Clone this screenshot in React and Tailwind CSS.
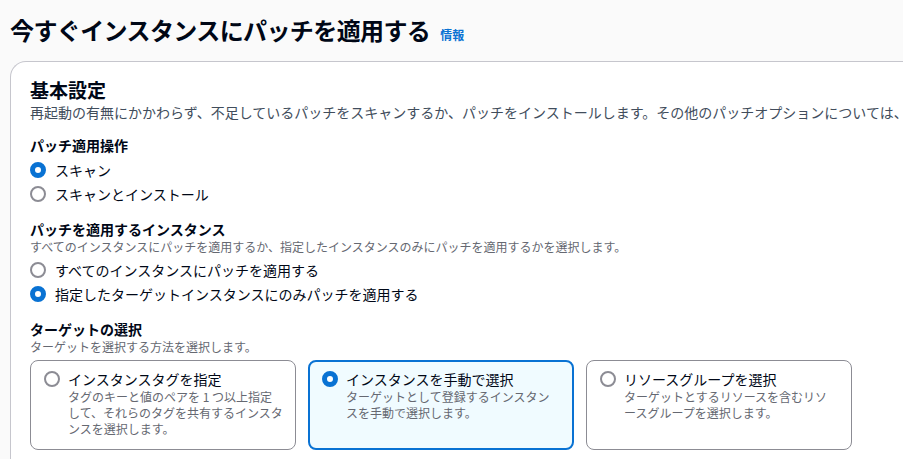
import React, { useState } from "react";

const font = { fontFamily: '"Noto Sans CJK JP", "Noto Sans", sans-serif' };

const Radio = ({ checked }) => (
  <span
    className={
      checked
        ? "block w-4 h-4 shrink-0 rounded-full border-[5px] border-[#0972d3] bg-white"
        : "block w-4 h-4 shrink-0 rounded-full border-2 border-[#8c8c94] bg-white"
    }
  />
);

const RadioRow = ({ label, checked, onClick }) => (
  <div className="flex items-center gap-[9px] h-6 cursor-pointer" onClick={onClick}>
    <Radio checked={checked} />
    <span className="text-sm text-[#000716] leading-5">{label}</span>
  </div>
);

const Tile = ({ title, lines, checked, onClick }) => (
  <div
    onClick={onClick}
    className={
      checked
        ? "w-[266px] h-[90px] rounded-lg border-2 border-[#0972d3] bg-[#f0fbff] pt-[7px] pl-[12px] pr-3 cursor-pointer"
        : "w-[266px] h-[90px] rounded-lg border border-[#8c8c94] bg-white pt-[8px] pl-[13px] pr-[13px] cursor-pointer"
    }
  >
    <div className="flex gap-2">
      <div className="h-5 flex items-center">
        <Radio checked={checked} />
      </div>
      <div>
        <div className="text-sm leading-5 text-[#000716]">{title}</div>
        {lines.map((line) => (
          <div key={line} className="text-xs leading-4 text-[#656871] whitespace-nowrap">
            {line}
          </div>
        ))}
      </div>
    </div>
  </div>
);

const App = () => {
  const [op, setOp] = useState("scan");
  const [scope, setScope] = useState("target");
  const [target, setTarget] = useState("manual");

  return (
    <div className="w-[903px] h-[459px] overflow-hidden bg-[#fafafa]" style={font}>
      <div className="pl-[10px] pt-[14px] flex items-baseline gap-[10px]">
        <h1 className="text-[24px] leading-8 font-bold text-[#000716] tracking-[-0.6px]">
          今すぐインスタンスにパッチを適用する
        </h1>
        <a className="text-xs font-bold text-[#0972d3]">情報</a>
      </div>

      <div className="ml-[10px] mt-[15px] w-[1000px] h-[420px] bg-white border-l border-t border-[#c6c6cd] rounded-tl-2xl pl-[19px] pt-[17px]">
        <h2 className="text-[19px] leading-[22px] font-bold text-[#000716]">基本設定</h2>
        <p className="mt-px w-max text-sm leading-5 text-[#414d5c] whitespace-nowrap">
          再起動の有無にかかわらず、不足しているパッチをスキャンするか、パッチをインストールします。その他のパッチオプションについては、
        </p>

        <div className="mt-[13px]">
          <div className="text-sm leading-5 font-bold text-[#000716]">パッチ適用操作</div>
          <div className="mt-[3px]">
            <RadioRow label="スキャン" checked={op === "scan"} onClick={() => setOp("scan")} />
            <RadioRow label="スキャンとインストール" checked={op === "install"} onClick={() => setOp("install")} />
          </div>
        </div>

        <div className="mt-[13px]">
          <div className="text-sm leading-5 font-bold text-[#000716]">パッチを適用するインスタンス</div>
          <div className="text-xs leading-4 text-[#656871]">
            すべてのインスタンスにパッチを適用するか、指定したインスタンスのみにパッチを適用するかを選択します。
          </div>
          <div className="mt-[3px]">
            <RadioRow label="すべてのインスタンスにパッチを適用する" checked={scope === "all"} onClick={() => setScope("all")} />
            <RadioRow
              label="指定したターゲットインスタンスにのみパッチを適用する"
              checked={scope === "target"}
              onClick={() => setScope("target")}
            />
          </div>
        </div>

        <div className="mt-[13px]">
          <div className="text-sm leading-5 font-bold text-[#000716]">ターゲットの選択</div>
          <div className="text-xs leading-4 text-[#656871]">ターゲットを選択する方法を選択します。</div>
          <div className="mt-[5px] flex gap-3">
            <Tile
              title="インスタンスタグを指定"
              lines={["タグのキーと値のペアを 1 つ以上指定", "して、それらのタグを共有するインスタ", "ンスを選択します。"]}
              checked={target === "tag"}
              onClick={() => setTarget("tag")}
            />
            <Tile
              title="インスタンスを手動で選択"
              lines={["ターゲットとして登録するインスタン", "スを手動で選択します。"]}
              checked={target === "manual"}
              onClick={() => setTarget("manual")}
            />
            <Tile
              title="リソースグループを選択"
              lines={["ターゲットとするリソースを含むリソ", "ースグループを選択します。"]}
              checked={target === "group"}
              onClick={() => setTarget("group")}
            />
          </div>
        </div>
      </div>
    </div>
  );
};

export default App;
